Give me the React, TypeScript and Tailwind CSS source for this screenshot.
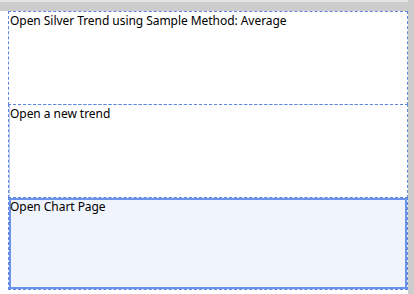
const items = [
  { label: "Open Silver Trend using Sample Method: Average", selected: false },
  { label: "Open a new trend", selected: false },
  { label: "Open Chart Page", selected: true },
];

export default function App() {
  return (
    <div className="flex w-[414px] h-[294px] bg-white font-['Noto_Sans',sans-serif] text-[12px] leading-[16px] text-black overflow-hidden">
      <div className="flex flex-col w-[408px]">
        {/* top strip */}
        <div className="h-[11px] bg-[#cccccc] border-t-2 border-[#e4e4e4]" />
        <div className="flex flex-col pl-[8px]">
          {items.map((item, i) => (
            <div
              key={item.label}
              className={
                item.selected
                  ? "h-[93px] border border-dashed border-[#5f86dc] bg-[#f0f4fd] shadow-[inset_0_0_0_2px_#6b93ea] px-[1px] pt-[1px]"
                  : i === 1
                  ? "h-[94px] -mb-px border border-dashed border-[#5f86dc] shadow-[inset_1px_0_0_#b8cbf3] px-[1px] pt-[1px]"
                  : "h-[94px] -mb-px border border-dashed border-[#5f86dc] px-[1px] pt-[1px]"
              }
            >
              <span className="whitespace-nowrap tracking-[-0.05px]">{item.label}</span>
            </div>
          ))}
        </div>
      </div>
      {/* right strip */}
      <div className="w-[6px] h-full bg-[#cccccc]" />
    </div>
  );
}
